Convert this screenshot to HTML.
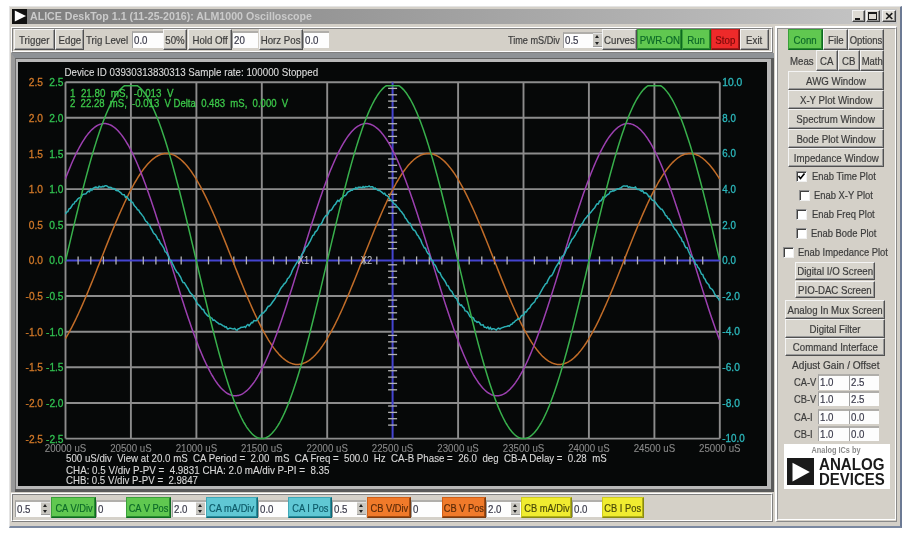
<!DOCTYPE html>
<html><head><meta charset="utf-8">
<style>
html,body{margin:0;padding:0;}
body{width:912px;height:534px;background:#ffffff;position:relative;overflow:hidden;font-family:"Liberation Sans",sans-serif;font-size:11px;color:#3c3c3c;-webkit-text-stroke:0.2px;}
.a{position:absolute;box-sizing:border-box;}
.b{position:absolute;box-sizing:border-box;background:#d8d5cd;border:1px solid;border-color:#f4f4f4 #505050 #505050 #f4f4f4;box-shadow:inset -1px -1px #9a9a9a;display:flex;align-items:center;justify-content:center;white-space:nowrap;overflow:hidden;color:#3c3c3c;}
.b span{display:inline-block;flex:none;}
.e{position:absolute;box-sizing:border-box;background:#fdfdfd;border-top:2px solid #b0aeaa;border-left:1px solid #a0a0a0;white-space:nowrap;overflow:hidden;color:#3a3a4a;padding-left:1px;}
.e span{display:inline-block;transform-origin:0 50%;}
.l{position:absolute;white-space:nowrap;color:#3c3c3c;transform-origin:0 50%;}
.sp{position:absolute;box-sizing:border-box;background:#c8c6c0;border-top:1px solid #e0e0e0;border-bottom:1px solid #9a9a9a;}
.sp:before,.sp:after{content:"";position:absolute;left:2px;border-left:2.5px solid transparent;border-right:2.5px solid transparent;}
.sp:before{top:1.5px;border-bottom:3px solid #202020;}
.sp:after{bottom:1.5px;border-top:3px solid #202020;}
.g{background:#60c850;color:#0c6a28;border-color:#3aa03a #0c6a20 #0c6a20 #3aa03a;box-shadow:inset -1px -1px #2a8a30;}
.cy{background:#60c8d4;color:#0c5a68;border-color:#40a8b8 #0c6a78 #0c6a78 #40a8b8;box-shadow:inset -1px -1px #2a8a98;}
.or{background:#f07a2a;color:#5a2a08;border-color:#d06018 #7a3a10 #7a3a10 #d06018;box-shadow:inset -1px -1px #a04a10;}
.ye{background:#f0ec30;color:#4a4a08;border-color:#d0cc20 #8a8a10 #8a8a10 #d0cc20;box-shadow:inset -1px -1px #b0b018;}
.rd{background:#ee2a2a;color:#7a0a0a;border-color:#c82020 #7a1010 #7a1010 #c82020;box-shadow:inset -1px -1px #a01818;}
</style></head><body>
<div id="root" style="position:absolute;left:0;top:0;width:912px;height:534px;overflow:hidden;filter:blur(0.35px)">
<div class="a" style="left:8.5px;top:5.5px;width:893.5px;height:522.0px;background:#d4d0c8;border-left:1px solid #e4e4e4;border-top:1px solid #e4e4e4;border-right:2px solid #6c7a94;border-bottom:2px solid #7a88a0;"></div>
<div class="a" style="left:12.0px;top:8.5px;width:885.0px;height:15.5px;background:linear-gradient(to right,#7c7c7c,#c6c6c6);"></div>
<div class="a" style="left:12.3px;top:8.5px;width:15.0px;height:15.0px;background:#101010;"></div>
<svg class="a" style="left:0;top:0" width="40" height="30"><polygon points="14.8,10.4 26,15.9 14.8,21.4" fill="#fff"/></svg>
<div class="l" style="left:30.0px;top:8.8px;line-height:14px;font-size:11px;transform:scaleX(0.965);color:#cacaca;font-weight:bold;-webkit-text-stroke:0;">ALICE DeskTop 1.1 (11-25-2016): ALM1000 Oscilloscope</div>
<div class="a" style="left:852.0px;top:10.0px;width:13.0px;height:12.0px;background:#dedbd4;border:1px solid;border-color:#f4f4f4 #404040 #404040 #f4f4f4;box-shadow:inset -1px -1px #909090;"></div>
<div class="a" style="left:854.8px;top:18.0px;width:5.7px;height:2.0px;background:#1a1a1a;"></div>
<div class="a" style="left:865.5px;top:10.0px;width:14.5px;height:12.0px;background:#dedbd4;border:1px solid;border-color:#f4f4f4 #404040 #404040 #f4f4f4;box-shadow:inset -1px -1px #909090;"></div>
<div class="a" style="left:868.0px;top:11.5px;width:8.5px;height:8.5px;border:1px solid #1a1a1a;border-top-width:2px;"></div>
<div class="a" style="left:881.5px;top:10.0px;width:14.5px;height:12.0px;background:#dedbd4;border:1px solid;border-color:#f4f4f4 #404040 #404040 #f4f4f4;box-shadow:inset -1px -1px #909090;"></div>
<svg class="a" style="left:882px;top:10px" width="14" height="12"><path d="M4.2,3.2 L10.3,9 M10.3,3.2 L4.2,9" stroke="#1a1a1a" stroke-width="1.6"/></svg>
<div class="a" style="left:11.0px;top:27.0px;width:762.0px;height:26.0px;border:1px solid;border-color:#ffffff #808080 #808080 #ffffff;"></div>
<div class="a" style="left:12.0px;top:28.0px;width:760.0px;height:24.0px;border:1px solid;border-color:#808080 #ffffff #ffffff #808080;"></div>
<div class="b " style="left:14.0px;top:29.0px;width:41.0px;height:21.0px;"><span style="transform:scaleX(0.880);font-size:11px">Trigger</span></div>
<div class="b " style="left:55.0px;top:29.0px;width:29.0px;height:21.0px;"><span style="transform:scaleX(0.880);font-size:11px">Edge</span></div>
<div class="l" style="left:86.0px;top:32.5px;line-height:14px;font-size:11px;transform:scaleX(0.880);">Trig Level</div>
<div class="e" style="left:132.0px;top:31.0px;width:31.0px;height:17.0px;line-height:14.0px"><span style="transform:scaleX(0.880)">0.0</span></div>
<div class="b " style="left:163.0px;top:29.0px;width:24.0px;height:21.0px;"><span style="transform:scaleX(0.880);font-size:11px">50%</span></div>
<div class="b " style="left:188.0px;top:29.0px;width:44.0px;height:21.0px;"><span style="transform:scaleX(0.880);font-size:11px">Hold Off</span></div>
<div class="e" style="left:232.0px;top:31.0px;width:26.0px;height:17.0px;line-height:14.0px"><span style="transform:scaleX(0.880)">20</span></div>
<div class="b " style="left:259.0px;top:29.0px;width:44.0px;height:21.0px;"><span style="transform:scaleX(0.880);font-size:11px">Horz Pos</span></div>
<div class="e" style="left:303.0px;top:31.0px;width:26.0px;height:17.0px;line-height:14.0px"><span style="transform:scaleX(0.880)">0.0</span></div>
<div class="l" style="left:508.0px;top:33.0px;line-height:14px;font-size:11px;transform:scaleX(0.830);">Time mS/Div</div>
<div class="e" style="left:563.0px;top:32.0px;width:39.0px;height:16.0px;line-height:13.0px"><span style="transform:scaleX(0.880)">0.5</span></div>
<div class="sp" style="left:593.0px;top:32.8px;width:9.0px;height:14.4px"></div>
<div class="b " style="left:602.0px;top:29.0px;width:35.0px;height:21.0px;"><span style="transform:scaleX(0.880);font-size:11px">Curves</span></div>
<div class="b g" style="left:637.0px;top:29.0px;width:45.0px;height:21.0px;"><span style="transform:scaleX(0.880);font-size:11px">PWR-ON</span></div>
<div class="b g" style="left:682.0px;top:29.0px;width:29.0px;height:21.0px;"><span style="transform:scaleX(0.880);font-size:11px">Run</span></div>
<div class="b rd" style="left:711.0px;top:29.0px;width:29.0px;height:21.0px;"><span style="transform:scaleX(0.880);font-size:11px">Stop</span></div>
<div class="b " style="left:740.0px;top:29.0px;width:29.0px;height:21.0px;"><span style="transform:scaleX(0.880);font-size:11px">Exit</span></div>
<div class="a" style="left:11.0px;top:52.5px;width:763.0px;height:439.5px;background:#5a5a5a;border-top:5px solid #8e9296;border-left:4px solid #9a9a9a;"></div>
<div class="a" style="left:15.0px;top:57.5px;width:755.5px;height:431.0px;background:#b8b8b8;border-top:1px solid #606060;border-left:1px solid #707070;"></div>
<div class="a" style="left:18.0px;top:62.0px;width:749.0px;height:424.0px;background:#060808;"></div>
<svg class="a" style="left:0;top:0" width="912" height="534" font-family="Liberation Sans, sans-serif"><defs><clipPath id="cc"><rect x="18" y="62" width="749" height="424"/></clipPath></defs><g clip-path="url(#cc)"><line x1="65.5" y1="82.2" x2="65.5" y2="438.6" stroke="#8c8c8c" stroke-width="1.9"/>
<line x1="130.9" y1="82.2" x2="130.9" y2="438.6" stroke="#8c8c8c" stroke-width="1.9"/>
<line x1="196.4" y1="82.2" x2="196.4" y2="438.6" stroke="#8c8c8c" stroke-width="1.9"/>
<line x1="261.8" y1="82.2" x2="261.8" y2="438.6" stroke="#8c8c8c" stroke-width="1.9"/>
<line x1="327.2" y1="82.2" x2="327.2" y2="438.6" stroke="#8c8c8c" stroke-width="1.9"/>
<line x1="458.1" y1="82.2" x2="458.1" y2="438.6" stroke="#8c8c8c" stroke-width="1.9"/>
<line x1="523.5" y1="82.2" x2="523.5" y2="438.6" stroke="#8c8c8c" stroke-width="1.9"/>
<line x1="588.9" y1="82.2" x2="588.9" y2="438.6" stroke="#8c8c8c" stroke-width="1.9"/>
<line x1="654.4" y1="82.2" x2="654.4" y2="438.6" stroke="#8c8c8c" stroke-width="1.9"/>
<line x1="719.8" y1="82.2" x2="719.8" y2="438.6" stroke="#8c8c8c" stroke-width="1.9"/>
<line x1="65.5" y1="82.2" x2="719.8" y2="82.2" stroke="#8c8c8c" stroke-width="1.9"/>
<line x1="65.5" y1="117.8" x2="719.8" y2="117.8" stroke="#8c8c8c" stroke-width="1.9"/>
<line x1="65.5" y1="153.5" x2="719.8" y2="153.5" stroke="#8c8c8c" stroke-width="1.9"/>
<line x1="65.5" y1="189.1" x2="719.8" y2="189.1" stroke="#8c8c8c" stroke-width="1.9"/>
<line x1="65.5" y1="224.8" x2="719.8" y2="224.8" stroke="#8c8c8c" stroke-width="1.9"/>
<line x1="65.5" y1="296.0" x2="719.8" y2="296.0" stroke="#8c8c8c" stroke-width="1.9"/>
<line x1="65.5" y1="331.7" x2="719.8" y2="331.7" stroke="#8c8c8c" stroke-width="1.9"/>
<line x1="65.5" y1="367.3" x2="719.8" y2="367.3" stroke="#8c8c8c" stroke-width="1.9"/>
<line x1="65.5" y1="403.0" x2="719.8" y2="403.0" stroke="#8c8c8c" stroke-width="1.9"/>
<line x1="65.5" y1="438.6" x2="719.8" y2="438.6" stroke="#8c8c8c" stroke-width="1.9"/>
<line x1="65.5" y1="260.4" x2="719.8" y2="260.4" stroke="#4444d0" stroke-width="2"/>
<line x1="392.6" y1="82.2" x2="392.6" y2="438.6" stroke="#4444d0" stroke-width="2"/>
<line x1="78.1" y1="256.4" x2="78.1" y2="264.4" stroke="#b4b4b4" stroke-width="1.3"/>
<line x1="90.8" y1="256.4" x2="90.8" y2="264.4" stroke="#b4b4b4" stroke-width="1.3"/>
<line x1="103.4" y1="256.4" x2="103.4" y2="264.4" stroke="#b4b4b4" stroke-width="1.3"/>
<line x1="116.0" y1="256.4" x2="116.0" y2="264.4" stroke="#b4b4b4" stroke-width="1.3"/>
<line x1="143.3" y1="256.4" x2="143.3" y2="264.4" stroke="#b4b4b4" stroke-width="1.3"/>
<line x1="155.9" y1="256.4" x2="155.9" y2="264.4" stroke="#b4b4b4" stroke-width="1.3"/>
<line x1="168.6" y1="256.4" x2="168.6" y2="264.4" stroke="#b4b4b4" stroke-width="1.3"/>
<line x1="181.2" y1="256.4" x2="181.2" y2="264.4" stroke="#b4b4b4" stroke-width="1.3"/>
<line x1="208.5" y1="256.4" x2="208.5" y2="264.4" stroke="#b4b4b4" stroke-width="1.3"/>
<line x1="221.1" y1="256.4" x2="221.1" y2="264.4" stroke="#b4b4b4" stroke-width="1.3"/>
<line x1="233.8" y1="256.4" x2="233.8" y2="264.4" stroke="#b4b4b4" stroke-width="1.3"/>
<line x1="246.4" y1="256.4" x2="246.4" y2="264.4" stroke="#b4b4b4" stroke-width="1.3"/>
<line x1="273.6" y1="256.4" x2="273.6" y2="264.4" stroke="#b4b4b4" stroke-width="1.3"/>
<line x1="286.3" y1="256.4" x2="286.3" y2="264.4" stroke="#b4b4b4" stroke-width="1.3"/>
<line x1="298.9" y1="256.4" x2="298.9" y2="264.4" stroke="#b4b4b4" stroke-width="1.3"/>
<line x1="311.6" y1="256.4" x2="311.6" y2="264.4" stroke="#b4b4b4" stroke-width="1.3"/>
<line x1="338.8" y1="256.4" x2="338.8" y2="264.4" stroke="#b4b4b4" stroke-width="1.3"/>
<line x1="351.5" y1="256.4" x2="351.5" y2="264.4" stroke="#b4b4b4" stroke-width="1.3"/>
<line x1="364.1" y1="256.4" x2="364.1" y2="264.4" stroke="#b4b4b4" stroke-width="1.3"/>
<line x1="376.8" y1="256.4" x2="376.8" y2="264.4" stroke="#b4b4b4" stroke-width="1.3"/>
<line x1="404.0" y1="256.4" x2="404.0" y2="264.4" stroke="#b4b4b4" stroke-width="1.3"/>
<line x1="416.6" y1="256.4" x2="416.6" y2="264.4" stroke="#b4b4b4" stroke-width="1.3"/>
<line x1="429.3" y1="256.4" x2="429.3" y2="264.4" stroke="#b4b4b4" stroke-width="1.3"/>
<line x1="441.9" y1="256.4" x2="441.9" y2="264.4" stroke="#b4b4b4" stroke-width="1.3"/>
<line x1="469.2" y1="256.4" x2="469.2" y2="264.4" stroke="#b4b4b4" stroke-width="1.3"/>
<line x1="481.8" y1="256.4" x2="481.8" y2="264.4" stroke="#b4b4b4" stroke-width="1.3"/>
<line x1="494.5" y1="256.4" x2="494.5" y2="264.4" stroke="#b4b4b4" stroke-width="1.3"/>
<line x1="507.1" y1="256.4" x2="507.1" y2="264.4" stroke="#b4b4b4" stroke-width="1.3"/>
<line x1="534.4" y1="256.4" x2="534.4" y2="264.4" stroke="#b4b4b4" stroke-width="1.3"/>
<line x1="547.0" y1="256.4" x2="547.0" y2="264.4" stroke="#b4b4b4" stroke-width="1.3"/>
<line x1="559.7" y1="256.4" x2="559.7" y2="264.4" stroke="#b4b4b4" stroke-width="1.3"/>
<line x1="572.3" y1="256.4" x2="572.3" y2="264.4" stroke="#b4b4b4" stroke-width="1.3"/>
<line x1="599.5" y1="256.4" x2="599.5" y2="264.4" stroke="#b4b4b4" stroke-width="1.3"/>
<line x1="612.2" y1="256.4" x2="612.2" y2="264.4" stroke="#b4b4b4" stroke-width="1.3"/>
<line x1="624.8" y1="256.4" x2="624.8" y2="264.4" stroke="#b4b4b4" stroke-width="1.3"/>
<line x1="637.5" y1="256.4" x2="637.5" y2="264.4" stroke="#b4b4b4" stroke-width="1.3"/>
<line x1="664.7" y1="256.4" x2="664.7" y2="264.4" stroke="#b4b4b4" stroke-width="1.3"/>
<line x1="677.4" y1="256.4" x2="677.4" y2="264.4" stroke="#b4b4b4" stroke-width="1.3"/>
<line x1="690.0" y1="256.4" x2="690.0" y2="264.4" stroke="#b4b4b4" stroke-width="1.3"/>
<line x1="702.7" y1="256.4" x2="702.7" y2="264.4" stroke="#b4b4b4" stroke-width="1.3"/>
<line x1="388.1" y1="88.4" x2="397.1" y2="88.4" stroke="#b4b4b4" stroke-width="1.3"/>
<line x1="388.1" y1="94.8" x2="397.1" y2="94.8" stroke="#b4b4b4" stroke-width="1.3"/>
<line x1="388.1" y1="101.1" x2="397.1" y2="101.1" stroke="#b4b4b4" stroke-width="1.3"/>
<line x1="388.1" y1="107.5" x2="397.1" y2="107.5" stroke="#b4b4b4" stroke-width="1.3"/>
<line x1="388.1" y1="123.7" x2="397.1" y2="123.7" stroke="#b4b4b4" stroke-width="1.3"/>
<line x1="388.1" y1="130.0" x2="397.1" y2="130.0" stroke="#b4b4b4" stroke-width="1.3"/>
<line x1="388.1" y1="136.4" x2="397.1" y2="136.4" stroke="#b4b4b4" stroke-width="1.3"/>
<line x1="388.1" y1="142.7" x2="397.1" y2="142.7" stroke="#b4b4b4" stroke-width="1.3"/>
<line x1="388.1" y1="159.0" x2="397.1" y2="159.0" stroke="#b4b4b4" stroke-width="1.3"/>
<line x1="388.1" y1="165.3" x2="397.1" y2="165.3" stroke="#b4b4b4" stroke-width="1.3"/>
<line x1="388.1" y1="171.7" x2="397.1" y2="171.7" stroke="#b4b4b4" stroke-width="1.3"/>
<line x1="388.1" y1="178.0" x2="397.1" y2="178.0" stroke="#b4b4b4" stroke-width="1.3"/>
<line x1="388.1" y1="194.3" x2="397.1" y2="194.3" stroke="#b4b4b4" stroke-width="1.3"/>
<line x1="388.1" y1="200.6" x2="397.1" y2="200.6" stroke="#b4b4b4" stroke-width="1.3"/>
<line x1="388.1" y1="207.0" x2="397.1" y2="207.0" stroke="#b4b4b4" stroke-width="1.3"/>
<line x1="388.1" y1="213.3" x2="397.1" y2="213.3" stroke="#b4b4b4" stroke-width="1.3"/>
<line x1="388.1" y1="229.6" x2="397.1" y2="229.6" stroke="#b4b4b4" stroke-width="1.3"/>
<line x1="388.1" y1="235.9" x2="397.1" y2="235.9" stroke="#b4b4b4" stroke-width="1.3"/>
<line x1="388.1" y1="242.3" x2="397.1" y2="242.3" stroke="#b4b4b4" stroke-width="1.3"/>
<line x1="388.1" y1="248.6" x2="397.1" y2="248.6" stroke="#b4b4b4" stroke-width="1.3"/>
<line x1="388.1" y1="264.8" x2="397.1" y2="264.8" stroke="#b4b4b4" stroke-width="1.3"/>
<line x1="388.1" y1="271.2" x2="397.1" y2="271.2" stroke="#b4b4b4" stroke-width="1.3"/>
<line x1="388.1" y1="277.5" x2="397.1" y2="277.5" stroke="#b4b4b4" stroke-width="1.3"/>
<line x1="388.1" y1="283.9" x2="397.1" y2="283.9" stroke="#b4b4b4" stroke-width="1.3"/>
<line x1="388.1" y1="300.1" x2="397.1" y2="300.1" stroke="#b4b4b4" stroke-width="1.3"/>
<line x1="388.1" y1="306.5" x2="397.1" y2="306.5" stroke="#b4b4b4" stroke-width="1.3"/>
<line x1="388.1" y1="312.8" x2="397.1" y2="312.8" stroke="#b4b4b4" stroke-width="1.3"/>
<line x1="388.1" y1="319.2" x2="397.1" y2="319.2" stroke="#b4b4b4" stroke-width="1.3"/>
<line x1="388.1" y1="335.4" x2="397.1" y2="335.4" stroke="#b4b4b4" stroke-width="1.3"/>
<line x1="388.1" y1="341.8" x2="397.1" y2="341.8" stroke="#b4b4b4" stroke-width="1.3"/>
<line x1="388.1" y1="348.1" x2="397.1" y2="348.1" stroke="#b4b4b4" stroke-width="1.3"/>
<line x1="388.1" y1="354.5" x2="397.1" y2="354.5" stroke="#b4b4b4" stroke-width="1.3"/>
<line x1="388.1" y1="370.7" x2="397.1" y2="370.7" stroke="#b4b4b4" stroke-width="1.3"/>
<line x1="388.1" y1="377.1" x2="397.1" y2="377.1" stroke="#b4b4b4" stroke-width="1.3"/>
<line x1="388.1" y1="383.4" x2="397.1" y2="383.4" stroke="#b4b4b4" stroke-width="1.3"/>
<line x1="388.1" y1="389.8" x2="397.1" y2="389.8" stroke="#b4b4b4" stroke-width="1.3"/>
<line x1="388.1" y1="406.0" x2="397.1" y2="406.0" stroke="#b4b4b4" stroke-width="1.3"/>
<line x1="388.1" y1="412.4" x2="397.1" y2="412.4" stroke="#b4b4b4" stroke-width="1.3"/>
<line x1="388.1" y1="418.7" x2="397.1" y2="418.7" stroke="#b4b4b4" stroke-width="1.3"/>
<line x1="388.1" y1="425.1" x2="397.1" y2="425.1" stroke="#b4b4b4" stroke-width="1.3"/>
<polyline fill="none" stroke="#c06c28" stroke-width="1.5" points="65.5,338.6 66.5,336.9 67.5,335.2 68.5,333.4 69.5,331.6 70.5,329.7 71.5,327.8 72.5,325.9 73.5,323.9 74.5,321.9 75.5,319.9 76.5,317.8 77.5,315.6 78.5,313.5 79.5,311.3 80.5,309.1 81.5,306.9 82.5,304.6 83.5,302.3 84.5,300.0 85.5,297.6 86.5,295.3 87.5,292.9 88.5,290.5 89.5,288.0 90.5,285.6 91.5,283.1 92.5,280.7 93.5,278.2 94.5,275.7 95.5,273.2 96.5,270.7 97.5,268.1 98.5,265.6 99.5,263.1 100.5,260.6 101.5,258.0 102.5,255.5 103.5,253.0 104.5,250.4 105.5,247.9 106.5,245.4 107.5,242.9 108.5,240.4 109.5,237.9 110.5,235.4 111.5,233.0 112.5,230.5 113.5,228.1 114.5,225.7 115.5,223.3 116.5,220.9 117.5,218.6 118.5,216.2 119.5,213.9 120.5,211.7 121.5,209.4 122.5,207.2 123.5,205.0 124.5,202.8 125.5,200.7 126.5,198.6 127.5,196.5 128.5,194.5 129.5,192.5 130.5,190.6 131.5,188.7 132.5,186.8 133.5,185.0 134.5,183.2 135.5,181.5 136.5,179.8 137.5,178.1 138.5,176.5 139.5,175.0 140.5,173.5 141.5,172.0 142.5,170.6 143.5,169.2 144.5,167.9 145.5,166.7 146.5,165.5 147.5,164.3 148.5,163.2 149.5,162.2 150.5,161.2 151.5,160.3 152.5,159.4 153.5,158.6 154.5,157.9 155.5,157.2 156.5,156.5 157.5,156.0 158.5,155.4 159.5,155.0 160.5,154.6 161.5,154.3 162.5,154.0 163.5,153.8 164.5,153.6 165.5,153.5 166.5,153.5 167.5,153.5 168.5,153.6 169.5,153.7 170.5,154.0 171.5,154.2 172.5,154.6 173.5,154.9 174.5,155.4 175.5,155.9 176.5,156.5 177.5,157.1 178.5,157.8 179.5,158.5 180.5,159.3 181.5,160.2 182.5,161.1 183.5,162.1 184.5,163.1 185.5,164.2 186.5,165.3 187.5,166.5 188.5,167.8 189.5,169.1 190.5,170.4 191.5,171.8 192.5,173.3 193.5,174.8 194.5,176.3 195.5,177.9 196.5,179.6 197.5,181.3 198.5,183.0 199.5,184.8 200.5,186.6 201.5,188.5 202.5,190.4 203.5,192.3 204.5,194.3 205.5,196.3 206.5,198.4 207.5,200.5 208.5,202.6 209.5,204.8 210.5,206.9 211.5,209.2 212.5,211.4 213.5,213.7 214.5,216.0 215.5,218.3 216.5,220.7 217.5,223.0 218.5,225.4 219.5,227.8 220.5,230.3 221.5,232.7 222.5,235.2 223.5,237.6 224.5,240.1 225.5,242.6 226.5,245.1 227.5,247.6 228.5,250.2 229.5,252.7 230.5,255.2 231.5,257.8 232.5,260.3 233.5,262.8 234.5,265.3 235.5,267.9 236.5,270.4 237.5,272.9 238.5,275.4 239.5,277.9 240.5,280.4 241.5,282.9 242.5,285.3 243.5,287.8 244.5,290.2 245.5,292.6 246.5,295.0 247.5,297.4 248.5,299.7 249.5,302.0 250.5,304.3 251.5,306.6 252.5,308.9 253.5,311.1 254.5,313.3 255.5,315.4 256.5,317.5 257.5,319.6 258.5,321.7 259.5,323.7 260.5,325.7 261.5,327.6 262.5,329.5 263.5,331.4 264.5,333.2 265.5,335.0 266.5,336.7 267.5,338.4 268.5,340.1 269.5,341.7 270.5,343.2 271.5,344.7 272.5,346.2 273.5,347.6 274.5,348.9 275.5,350.2 276.5,351.4 277.5,352.6 278.5,353.8 279.5,354.9 280.5,355.9 281.5,356.9 282.5,357.8 283.5,358.6 284.5,359.4 285.5,360.2 286.5,360.9 287.5,361.5 288.5,362.1 289.5,362.6 290.5,363.0 291.5,363.4 292.5,363.7 293.5,364.0 294.5,364.2 295.5,364.4 296.5,364.4 297.5,364.5 298.5,364.4 299.5,364.3 300.5,364.2 301.5,364.0 302.5,363.7 303.5,363.3 304.5,362.9 305.5,362.5 306.5,362.0 307.5,361.4 308.5,360.8 309.5,360.1 310.5,359.3 311.5,358.5 312.5,357.6 313.5,356.7 314.5,355.7 315.5,354.7 316.5,353.6 317.5,352.4 318.5,351.2 319.5,350.0 320.5,348.7 321.5,347.3 322.5,345.9 323.5,344.4 324.5,342.9 325.5,341.4 326.5,339.8 327.5,338.1 328.5,336.4 329.5,334.7 330.5,332.9 331.5,331.1 332.5,329.2 333.5,327.3 334.5,325.3 335.5,323.4 336.5,321.3 337.5,319.3 338.5,317.2 339.5,315.0 340.5,312.9 341.5,310.7 342.5,308.5 343.5,306.2 344.5,303.9 345.5,301.6 346.5,299.3 347.5,297.0 348.5,294.6 349.5,292.2 350.5,289.8 351.5,287.3 352.5,284.9 353.5,282.4 354.5,280.0 355.5,277.5 356.5,275.0 357.5,272.5 358.5,270.0 359.5,267.4 360.5,264.9 361.5,262.4 362.5,259.8 363.5,257.3 364.5,254.8 365.5,252.2 366.5,249.7 367.5,247.2 368.5,244.7 369.5,242.2 370.5,239.7 371.5,237.2 372.5,234.7 373.5,232.3 374.5,229.8 375.5,227.4 376.5,225.0 377.5,222.6 378.5,220.2 379.5,217.9 380.5,215.6 381.5,213.3 382.5,211.0 383.5,208.8 384.5,206.6 385.5,204.4 386.5,202.2 387.5,200.1 388.5,198.0 389.5,196.0 390.5,194.0 391.5,192.0 392.5,190.1 393.5,188.2 394.5,186.3 395.5,184.5 396.5,182.7 397.5,181.0 398.5,179.3 399.5,177.7 400.5,176.1 401.5,174.5 402.5,173.0 403.5,171.6 404.5,170.2 405.5,168.9 406.5,167.6 407.5,166.3 408.5,165.1 409.5,164.0 410.5,162.9 411.5,161.9 412.5,161.0 413.5,160.0 414.5,159.2 415.5,158.4 416.5,157.7 417.5,157.0 418.5,156.4 419.5,155.8 420.5,155.3 421.5,154.9 422.5,154.5 423.5,154.2 424.5,153.9 425.5,153.7 426.5,153.6 427.5,153.5 428.5,153.5 429.5,153.5 430.5,153.6 431.5,153.8 432.5,154.0 433.5,154.3 434.5,154.7 435.5,155.1 436.5,155.5 437.5,156.1 438.5,156.6 439.5,157.3 440.5,158.0 441.5,158.8 442.5,159.6 443.5,160.5 444.5,161.4 445.5,162.4 446.5,163.4 447.5,164.5 448.5,165.7 449.5,166.9 450.5,168.1 451.5,169.5 452.5,170.8 453.5,172.2 454.5,173.7 455.5,175.2 456.5,176.8 457.5,178.4 458.5,180.1 459.5,181.8 460.5,183.5 461.5,185.3 462.5,187.1 463.5,189.0 464.5,190.9 465.5,192.9 466.5,194.9 467.5,196.9 468.5,199.0 469.5,201.1 470.5,203.2 471.5,205.4 472.5,207.6 473.5,209.8 474.5,212.0 475.5,214.3 476.5,216.6 477.5,219.0 478.5,221.3 479.5,223.7 480.5,226.1 481.5,228.5 482.5,230.9 483.5,233.4 484.5,235.9 485.5,238.3 486.5,240.8 487.5,243.3 488.5,245.8 489.5,248.3 490.5,250.9 491.5,253.4 492.5,255.9 493.5,258.5 494.5,261.0 495.5,263.5 496.5,266.1 497.5,268.6 498.5,271.1 499.5,273.6 500.5,276.1 501.5,278.6 502.5,281.1 503.5,283.6 504.5,286.0 505.5,288.5 506.5,290.9 507.5,293.3 508.5,295.7 509.5,298.0 510.5,300.4 511.5,302.7 512.5,305.0 513.5,307.2 514.5,309.5 515.5,311.7 516.5,313.9 517.5,316.0 518.5,318.1 519.5,320.2 520.5,322.3 521.5,324.3 522.5,326.2 523.5,328.2 524.5,330.1 525.5,331.9 526.5,333.7 527.5,335.5 528.5,337.2 529.5,338.9 530.5,340.5 531.5,342.1 532.5,343.6 533.5,345.1 534.5,346.6 535.5,347.9 536.5,349.3 537.5,350.6 538.5,351.8 539.5,353.0 540.5,354.1 541.5,355.2 542.5,356.2 543.5,357.1 544.5,358.0 545.5,358.9 546.5,359.7 547.5,360.4 548.5,361.1 549.5,361.7 550.5,362.2 551.5,362.7 552.5,363.1 553.5,363.5 554.5,363.8 555.5,364.1 556.5,364.3 557.5,364.4 558.5,364.5 559.5,364.5 560.5,364.4 561.5,364.3 562.5,364.1 563.5,363.9 564.5,363.6 565.5,363.2 566.5,362.8 567.5,362.3 568.5,361.8 569.5,361.2 570.5,360.6 571.5,359.9 572.5,359.1 573.5,358.3 574.5,357.4 575.5,356.4 576.5,355.4 577.5,354.4 578.5,353.3 579.5,352.1 580.5,350.9 581.5,349.6 582.5,348.3 583.5,346.9 584.5,345.5 585.5,344.0 586.5,342.5 587.5,340.9 588.5,339.3 589.5,337.7 590.5,335.9 591.5,334.2 592.5,332.4 593.5,330.6 594.5,328.7 595.5,326.8 596.5,324.8 597.5,322.8 598.5,320.8 599.5,318.7 600.5,316.6 601.5,314.4 602.5,312.3 603.5,310.1 604.5,307.8 605.5,305.6 606.5,303.3 607.5,301.0 608.5,298.7 609.5,296.3 610.5,293.9 611.5,291.5 612.5,289.1 613.5,286.7 614.5,284.2 615.5,281.7 616.5,279.3 617.5,276.8 618.5,274.3 619.5,271.8 620.5,269.2 621.5,266.7 622.5,264.2 623.5,261.7 624.5,259.1 625.5,256.6 626.5,254.1 627.5,251.5 628.5,249.0 629.5,246.5 630.5,244.0 631.5,241.5 632.5,239.0 633.5,236.5 634.5,234.0 635.5,231.6 636.5,229.2 637.5,226.7 638.5,224.3 639.5,222.0 640.5,219.6 641.5,217.3 642.5,214.9 643.5,212.6 644.5,210.4 645.5,208.2 646.5,205.9 647.5,203.8 648.5,201.6 649.5,199.5 650.5,197.4 651.5,195.4 652.5,193.4 653.5,191.4 654.5,189.5 655.5,187.6 656.5,185.8 657.5,184.0 658.5,182.2 659.5,180.5 660.5,178.8 661.5,177.2 662.5,175.6 663.5,174.1 664.5,172.6 665.5,171.2 666.5,169.8 667.5,168.5 668.5,167.2 669.5,166.0 670.5,164.8 671.5,163.7 672.5,162.6 673.5,161.6 674.5,160.7 675.5,159.8 676.5,159.0 677.5,158.2 678.5,157.5 679.5,156.8 680.5,156.2 681.5,155.7 682.5,155.2 683.5,154.8 684.5,154.4 685.5,154.1 686.5,153.9 687.5,153.7 688.5,153.5 689.5,153.5 690.5,153.5 691.5,153.5 692.5,153.7 693.5,153.9 694.5,154.1 695.5,154.4 696.5,154.8 697.5,155.2 698.5,155.7 699.5,156.2 700.5,156.8 701.5,157.5 702.5,158.2 703.5,159.0 704.5,159.8 705.5,160.7 706.5,161.7 707.5,162.7 708.5,163.7 709.5,164.8 710.5,166.0 711.5,167.2 712.5,168.5 713.5,169.8 714.5,171.2 715.5,172.6 716.5,174.1 717.5,175.7 718.5,177.2 719.5,178.9"/>
<polyline fill="none" stroke="#9c40b0" stroke-width="1.5" points="65.5,178.7 66.5,176.1 67.5,173.5 68.5,171.0 69.5,168.6 70.5,166.2 71.5,163.8 72.5,161.5 73.5,159.3 74.5,157.1 75.5,155.0 76.5,152.9 77.5,150.9 78.5,149.0 79.5,147.1 80.5,145.3 81.5,143.6 82.5,141.9 83.5,140.3 84.5,138.8 85.5,137.3 86.5,135.9 87.5,134.6 88.5,133.3 89.5,132.2 90.5,131.0 91.5,130.0 92.5,129.1 93.5,128.2 94.5,127.4 95.5,126.6 96.5,126.0 97.5,125.4 98.5,124.9 99.5,124.5 100.5,124.1 101.5,123.9 102.5,123.7 103.5,123.6 104.5,123.5 105.5,123.6 106.5,123.7 107.5,123.9 108.5,124.2 109.5,124.6 110.5,125.0 111.5,125.5 112.5,126.1 113.5,126.8 114.5,127.5 115.5,128.4 116.5,129.3 117.5,130.2 118.5,131.3 119.5,132.4 120.5,133.6 121.5,134.9 122.5,136.2 123.5,137.6 124.5,139.1 125.5,140.6 126.5,142.3 127.5,144.0 128.5,145.7 129.5,147.5 130.5,149.4 131.5,151.4 132.5,153.4 133.5,155.4 134.5,157.6 135.5,159.8 136.5,162.0 137.5,164.3 138.5,166.7 139.5,169.1 140.5,171.6 141.5,174.1 142.5,176.6 143.5,179.3 144.5,181.9 145.5,184.6 146.5,187.4 147.5,190.2 148.5,193.0 149.5,195.9 150.5,198.8 151.5,201.7 152.5,204.7 153.5,207.7 154.5,210.7 155.5,213.8 156.5,216.9 157.5,220.0 158.5,223.1 159.5,226.3 160.5,229.5 161.5,232.7 162.5,235.9 163.5,239.1 164.5,242.3 165.5,245.6 166.5,248.8 167.5,252.1 168.5,255.4 169.5,258.6 170.5,261.9 171.5,265.2 172.5,268.4 173.5,271.7 174.5,274.9 175.5,278.2 176.5,281.4 177.5,284.6 178.5,287.8 179.5,291.0 180.5,294.2 181.5,297.4 182.5,300.5 183.5,303.6 184.5,306.7 185.5,309.7 186.5,312.7 187.5,315.7 188.5,318.7 189.5,321.6 190.5,324.5 191.5,327.4 192.5,330.2 193.5,333.0 194.5,335.7 195.5,338.4 196.5,341.0 197.5,343.6 198.5,346.2 199.5,348.7 200.5,351.1 201.5,353.5 202.5,355.9 203.5,358.2 204.5,360.4 205.5,362.5 206.5,364.7 207.5,366.7 208.5,368.7 209.5,370.6 210.5,372.5 211.5,374.3 212.5,376.0 213.5,377.7 214.5,379.3 215.5,380.8 216.5,382.3 217.5,383.7 218.5,385.0 219.5,386.2 220.5,387.4 221.5,388.5 222.5,389.5 223.5,390.4 224.5,391.3 225.5,392.1 226.5,392.8 227.5,393.5 228.5,394.0 229.5,394.5 230.5,394.9 231.5,395.3 232.5,395.5 233.5,395.7 234.5,395.8 235.5,395.8 236.5,395.8 237.5,395.6 238.5,395.4 239.5,395.1 240.5,394.8 241.5,394.3 242.5,393.8 243.5,393.2 244.5,392.5 245.5,391.7 246.5,390.9 247.5,390.0 248.5,389.0 249.5,387.9 250.5,386.8 251.5,385.6 252.5,384.3 253.5,383.0 254.5,381.6 255.5,380.1 256.5,378.5 257.5,376.9 258.5,375.2 259.5,373.4 260.5,371.6 261.5,369.7 262.5,367.7 263.5,365.7 264.5,363.6 265.5,361.5 266.5,359.3 267.5,357.0 268.5,354.7 269.5,352.4 270.5,349.9 271.5,347.5 272.5,344.9 273.5,342.4 274.5,339.7 275.5,337.1 276.5,334.4 277.5,331.6 278.5,328.8 279.5,326.0 280.5,323.1 281.5,320.2 282.5,317.3 283.5,314.3 284.5,311.3 285.5,308.2 286.5,305.2 287.5,302.1 288.5,298.9 289.5,295.8 290.5,292.6 291.5,289.5 292.5,286.3 293.5,283.1 294.5,279.8 295.5,276.6 296.5,273.3 297.5,270.1 298.5,266.8 299.5,263.6 300.5,260.3 301.5,257.0 302.5,253.8 303.5,250.5 304.5,247.2 305.5,244.0 306.5,240.7 307.5,237.5 308.5,234.3 309.5,231.1 310.5,227.9 311.5,224.7 312.5,221.6 313.5,218.5 314.5,215.4 315.5,212.3 316.5,209.2 317.5,206.2 318.5,203.2 319.5,200.3 320.5,197.3 321.5,194.4 322.5,191.6 323.5,188.8 324.5,186.0 325.5,183.3 326.5,180.6 327.5,178.0 328.5,175.4 329.5,172.8 330.5,170.3 331.5,167.9 332.5,165.5 333.5,163.2 334.5,160.9 335.5,158.7 336.5,156.5 337.5,154.4 338.5,152.4 339.5,150.4 340.5,148.5 341.5,146.6 342.5,144.8 343.5,143.1 344.5,141.5 345.5,139.9 346.5,138.4 347.5,136.9 348.5,135.5 349.5,134.2 350.5,133.0 351.5,131.8 352.5,130.7 353.5,129.7 354.5,128.8 355.5,127.9 356.5,127.2 357.5,126.4 358.5,125.8 359.5,125.3 360.5,124.8 361.5,124.4 362.5,124.1 363.5,123.8 364.5,123.6 365.5,123.6 366.5,123.5 367.5,123.6 368.5,123.8 369.5,124.0 370.5,124.3 371.5,124.7 372.5,125.1 373.5,125.7 374.5,126.3 375.5,127.0 376.5,127.8 377.5,128.6 378.5,129.5 379.5,130.5 380.5,131.6 381.5,132.7 382.5,133.9 383.5,135.2 384.5,136.6 385.5,138.0 386.5,139.5 387.5,141.1 388.5,142.7 389.5,144.4 390.5,146.2 391.5,148.1 392.5,150.0 393.5,151.9 394.5,153.9 395.5,156.0 396.5,158.2 397.5,160.4 398.5,162.7 399.5,165.0 400.5,167.4 401.5,169.8 402.5,172.3 403.5,174.8 404.5,177.4 405.5,180.0 406.5,182.7 407.5,185.4 408.5,188.2 409.5,191.0 410.5,193.8 411.5,196.7 412.5,199.6 413.5,202.5 414.5,205.5 415.5,208.5 416.5,211.6 417.5,214.6 418.5,217.7 419.5,220.9 420.5,224.0 421.5,227.2 422.5,230.4 423.5,233.6 424.5,236.8 425.5,240.0 426.5,243.2 427.5,246.5 428.5,249.7 429.5,253.0 430.5,256.3 431.5,259.5 432.5,262.8 433.5,266.1 434.5,269.3 435.5,272.6 436.5,275.8 437.5,279.1 438.5,282.3 439.5,285.5 440.5,288.7 441.5,291.9 442.5,295.1 443.5,298.2 444.5,301.4 445.5,304.5 446.5,307.5 447.5,310.6 448.5,313.6 449.5,316.6 450.5,319.5 451.5,322.4 452.5,325.3 453.5,328.2 454.5,331.0 455.5,333.7 456.5,336.5 457.5,339.1 458.5,341.8 459.5,344.4 460.5,346.9 461.5,349.4 462.5,351.8 463.5,354.2 464.5,356.5 465.5,358.8 466.5,361.0 467.5,363.1 468.5,365.2 469.5,367.3 470.5,369.2 471.5,371.2 472.5,373.0 473.5,374.8 474.5,376.5 475.5,378.1 476.5,379.7 477.5,381.2 478.5,382.7 479.5,384.0 480.5,385.3 481.5,386.5 482.5,387.7 483.5,388.8 484.5,389.8 485.5,390.7 486.5,391.6 487.5,392.3 488.5,393.0 489.5,393.6 490.5,394.2 491.5,394.7 492.5,395.0 493.5,395.4 494.5,395.6 495.5,395.7 496.5,395.8 497.5,395.8 498.5,395.7 499.5,395.6 500.5,395.3 501.5,395.0 502.5,394.6 503.5,394.2 504.5,393.6 505.5,393.0 506.5,392.3 507.5,391.5 508.5,390.7 509.5,389.7 510.5,388.7 511.5,387.6 512.5,386.5 513.5,385.3 514.5,384.0 515.5,382.6 516.5,381.1 517.5,379.6 518.5,378.1 519.5,376.4 520.5,374.7 521.5,372.9 522.5,371.1 523.5,369.1 524.5,367.2 525.5,365.1 526.5,363.0 527.5,360.9 528.5,358.7 529.5,356.4 530.5,354.1 531.5,351.7 532.5,349.2 533.5,346.8 534.5,344.2 535.5,341.6 536.5,339.0 537.5,336.3 538.5,333.6 539.5,330.8 540.5,328.0 541.5,325.2 542.5,322.3 543.5,319.4 544.5,316.4 545.5,313.4 546.5,310.4 547.5,307.4 548.5,304.3 549.5,301.2 550.5,298.1 551.5,294.9 552.5,291.8 553.5,288.6 554.5,285.4 555.5,282.2 556.5,278.9 557.5,275.7 558.5,272.4 559.5,269.2 560.5,265.9 561.5,262.6 562.5,259.4 563.5,256.1 564.5,252.8 565.5,249.6 566.5,246.3 567.5,243.1 568.5,239.8 569.5,236.6 570.5,233.4 571.5,230.2 572.5,227.0 573.5,223.8 574.5,220.7 575.5,217.6 576.5,214.5 577.5,211.4 578.5,208.4 579.5,205.4 580.5,202.4 581.5,199.4 582.5,196.5 583.5,193.6 584.5,190.8 585.5,188.0 586.5,185.3 587.5,182.5 588.5,179.9 589.5,177.2 590.5,174.7 591.5,172.1 592.5,169.7 593.5,167.2 594.5,164.9 595.5,162.5 596.5,160.3 597.5,158.1 598.5,155.9 599.5,153.8 600.5,151.8 601.5,149.9 602.5,148.0 603.5,146.1 604.5,144.4 605.5,142.6 606.5,141.0 607.5,139.4 608.5,137.9 609.5,136.5 610.5,135.2 611.5,133.9 612.5,132.7 613.5,131.5 614.5,130.5 615.5,129.5 616.5,128.6 617.5,127.7 618.5,126.9 619.5,126.3 620.5,125.6 621.5,125.1 622.5,124.7 623.5,124.3 624.5,124.0 625.5,123.8 626.5,123.6 627.5,123.5 628.5,123.6 629.5,123.7 630.5,123.8 631.5,124.1 632.5,124.4 633.5,124.8 634.5,125.3 635.5,125.8 636.5,126.5 637.5,127.2 638.5,128.0 639.5,128.8 640.5,129.8 641.5,130.8 642.5,131.9 643.5,133.1 644.5,134.3 645.5,135.6 646.5,137.0 647.5,138.4 648.5,140.0 649.5,141.5 650.5,143.2 651.5,144.9 652.5,146.7 653.5,148.6 654.5,150.5 655.5,152.5 656.5,154.5 657.5,156.6 658.5,158.8 659.5,161.0 660.5,163.3 661.5,165.6 662.5,168.0 663.5,170.5 664.5,173.0 665.5,175.5 666.5,178.1 667.5,180.7 668.5,183.4 669.5,186.2 670.5,188.9 671.5,191.7 672.5,194.6 673.5,197.5 674.5,200.4 675.5,203.4 676.5,206.4 677.5,209.4 678.5,212.4 679.5,215.5 680.5,218.6 681.5,221.7 682.5,224.9 683.5,228.1 684.5,231.3 685.5,234.5 686.5,237.7 687.5,240.9 688.5,244.1 689.5,247.4 690.5,250.7 691.5,253.9 692.5,257.2 693.5,260.5 694.5,263.7 695.5,267.0 696.5,270.3 697.5,273.5 698.5,276.8 699.5,280.0 700.5,283.2 701.5,286.4 702.5,289.6 703.5,292.8 704.5,296.0 705.5,299.1 706.5,302.2 707.5,305.3 708.5,308.4 709.5,311.4 710.5,314.4 711.5,317.4 712.5,320.3 713.5,323.3 714.5,326.1 715.5,329.0 716.5,331.8 717.5,334.5 718.5,337.2 719.5,339.9"/>
<polyline fill="none" stroke="#2cb0b4" stroke-width="1.5" points="65.5,214.0 66.7,212.0 67.9,211.6 69.1,208.8 70.3,208.3 71.5,206.5 72.7,204.4 73.9,204.0 75.1,201.6 76.3,201.2 77.5,199.2 78.7,198.1 79.9,197.7 81.1,197.5 82.3,194.9 83.5,194.2 84.7,194.1 85.9,193.9 87.1,192.3 88.3,191.1 89.5,191.7 90.7,189.0 91.9,190.2 93.1,188.4 94.3,187.6 95.5,187.1 96.7,187.2 97.9,188.0 99.1,186.3 100.3,187.0 101.5,187.0 102.7,186.4 103.9,186.7 105.1,185.7 106.3,185.8 107.5,186.3 108.7,187.6 109.9,187.3 111.1,187.4 112.3,188.4 113.5,188.5 114.7,188.7 115.9,190.4 117.1,190.8 118.3,190.5 119.5,191.9 120.7,192.6 121.9,194.2 123.1,194.8 124.3,194.8 125.5,197.3 126.7,196.5 127.9,198.2 129.1,200.1 130.3,200.0 131.5,202.0 132.7,202.3 133.9,205.0 135.1,206.6 136.3,207.7 137.5,209.8 138.7,210.1 139.9,212.5 141.1,213.8 142.3,215.4 143.5,216.8 144.7,219.4 145.9,221.3 147.1,222.0 148.3,224.2 149.5,224.7 150.7,228.0 151.9,229.7 153.1,232.4 154.3,233.9 155.5,234.7 156.7,236.9 157.9,239.5 159.1,240.0 160.3,243.0 161.5,244.4 162.7,246.3 163.9,248.2 165.1,251.8 166.3,252.4 167.5,254.7 168.7,257.1 169.9,260.2 171.1,260.5 172.3,263.4 173.5,265.7 174.7,268.4 175.9,270.3 177.1,272.4 178.3,273.2 179.5,275.5 180.7,277.3 181.9,280.4 183.1,282.5 184.3,282.7 185.5,284.7 186.7,286.7 187.9,288.5 189.1,290.9 190.3,292.9 191.5,294.0 192.7,295.2 193.9,297.8 195.1,299.4 196.3,301.5 197.5,303.9 198.7,304.9 199.9,306.1 201.1,307.8 202.3,309.4 203.5,309.4 204.7,312.6 205.9,313.7 207.1,315.2 208.3,316.2 209.5,316.5 210.7,317.7 211.9,318.1 213.1,320.3 214.3,320.0 215.5,321.0 216.7,322.2 217.9,322.9 219.1,324.0 220.3,324.1 221.5,324.7 222.7,325.6 223.9,326.0 225.1,327.1 226.3,326.8 227.5,329.0 228.7,328.8 229.9,328.0 231.1,328.4 232.3,328.8 233.5,328.9 234.7,328.4 235.9,329.9 237.1,330.1 238.3,328.8 239.5,328.6 240.7,327.5 241.9,327.2 243.1,327.3 244.3,326.7 245.5,327.4 246.7,325.4 247.9,324.5 249.1,325.8 250.3,324.2 251.5,322.5 252.7,322.6 253.9,320.5 255.1,320.7 256.3,320.7 257.5,319.4 258.7,317.9 259.9,315.8 261.1,314.8 262.3,313.1 263.5,313.1 264.7,311.3 265.9,310.4 267.1,308.0 268.3,306.3 269.5,306.1 270.7,304.9 271.9,303.0 273.1,301.3 274.3,299.7 275.5,297.8 276.7,295.0 277.9,293.8 279.1,291.7 280.3,289.2 281.5,287.3 282.7,286.0 283.9,284.1 285.1,283.1 286.3,281.7 287.5,278.7 288.7,277.8 289.9,275.9 291.1,273.8 292.3,270.5 293.5,268.2 294.7,266.2 295.9,264.0 297.1,262.0 298.3,260.9 299.5,259.4 300.7,257.3 301.9,254.4 303.1,252.7 304.3,251.0 305.5,247.4 306.7,246.6 307.9,245.2 309.1,242.9 310.3,240.8 311.5,238.2 312.7,235.6 313.9,235.0 315.1,232.1 316.3,231.2 317.5,229.7 318.7,226.6 319.9,224.7 321.1,224.1 322.3,221.9 323.5,218.9 324.7,217.1 325.9,215.5 327.1,215.5 328.3,213.6 329.5,210.6 330.7,210.6 331.9,209.4 333.1,207.2 334.3,205.2 335.5,204.2 336.7,202.0 337.9,200.4 339.1,201.3 340.3,199.4 341.5,198.0 342.7,197.8 343.9,195.7 345.1,195.7 346.3,194.6 347.5,192.4 348.7,191.7 349.9,191.0 351.1,190.2 352.3,190.3 353.5,188.9 354.7,188.7 355.9,187.6 357.1,188.9 358.3,187.3 359.5,187.2 360.7,187.2 361.9,187.8 363.1,186.6 364.3,187.6 365.5,186.6 366.7,186.7 367.9,186.8 369.1,185.9 370.3,187.0 371.5,186.7 372.7,186.7 373.9,188.8 375.1,187.9 376.3,189.0 377.5,190.1 378.7,190.4 379.9,190.6 381.1,191.7 382.3,192.6 383.5,193.9 384.7,193.3 385.9,195.3 387.1,195.6 388.3,196.7 389.5,198.9 390.7,199.5 391.9,200.8 393.1,202.5 394.3,204.1 395.5,204.4 396.7,206.2 397.9,207.4 399.1,208.8 400.3,210.7 401.5,211.8 402.7,213.5 403.9,215.0 405.1,217.7 406.3,218.9 407.5,221.0 408.7,222.9 409.9,223.2 411.1,225.7 412.3,228.3 413.5,230.0 414.7,230.3 415.9,232.2 417.1,234.8 418.3,236.0 419.5,238.3 420.7,239.9 421.9,243.3 423.1,245.5 424.3,247.8 425.5,248.2 426.7,251.5 427.9,253.4 429.1,254.3 430.3,258.0 431.5,260.2 432.7,260.6 433.9,264.3 435.1,265.1 436.3,267.4 437.5,270.5 438.7,272.2 439.9,272.7 441.1,275.3 442.3,277.5 443.5,279.0 444.7,280.7 445.9,282.9 447.1,285.7 448.3,286.0 449.5,289.0 450.7,290.6 451.9,291.5 453.1,294.0 454.3,296.4 455.5,297.8 456.7,298.5 457.9,302.2 459.1,303.4 460.3,305.4 461.5,305.0 462.7,306.9 463.9,307.8 465.1,310.9 466.3,311.1 467.5,312.1 468.7,314.1 469.9,316.4 471.1,317.4 472.3,317.3 473.5,318.1 474.7,320.8 475.9,321.1 477.1,322.3 478.3,321.8 479.5,322.6 480.7,324.7 481.9,324.9 483.1,324.8 484.3,327.3 485.5,327.2 486.7,328.0 487.9,326.9 489.1,328.9 490.3,327.5 491.5,329.5 492.7,328.8 493.9,328.7 495.1,329.3 496.3,330.1 497.5,328.6 498.7,328.2 499.9,329.0 501.1,328.1 502.3,327.6 503.5,327.3 504.7,326.7 505.9,326.6 507.1,326.3 508.3,325.8 509.5,326.1 510.7,324.4 511.9,324.2 513.1,322.7 514.3,322.2 515.5,320.6 516.7,320.2 517.9,318.6 519.1,319.2 520.3,317.7 521.5,315.7 522.7,315.2 523.9,314.9 525.1,311.8 526.3,312.0 527.5,309.8 528.7,308.5 529.9,307.8 531.1,305.3 532.3,304.0 533.5,302.8 534.7,301.9 535.9,298.8 537.1,298.2 538.3,296.2 539.5,294.3 540.7,292.0 541.9,290.0 543.1,287.6 544.3,285.9 545.5,283.8 546.7,283.4 547.9,280.4 549.1,278.2 550.3,276.1 551.5,275.8 552.7,273.8 553.9,271.4 555.1,268.5 556.3,266.4 557.5,264.5 558.7,262.8 559.9,260.1 561.1,258.6 562.3,256.2 563.5,255.7 564.7,253.7 565.9,250.7 567.1,248.0 568.3,247.5 569.5,244.1 570.7,242.1 571.9,239.4 573.1,238.2 574.3,236.5 575.5,234.6 576.7,232.0 577.9,230.7 579.1,227.8 580.3,226.5 581.5,224.2 582.7,223.1 583.9,220.5 585.1,218.7 586.3,217.6 587.5,215.8 588.7,214.9 589.9,213.2 591.1,212.1 592.3,210.4 593.5,209.0 594.7,207.9 595.9,205.4 597.1,203.9 598.3,204.0 599.5,200.9 600.7,200.9 601.9,199.5 603.1,197.1 604.3,197.7 605.5,196.8 606.7,195.2 607.9,194.5 609.1,193.8 610.3,191.5 611.5,191.6 612.7,190.8 613.9,190.9 615.1,190.2 616.3,189.7 617.5,188.7 618.7,188.9 619.9,188.1 621.1,187.8 622.3,186.5 623.5,185.9 624.7,185.9 625.9,186.3 627.1,185.8 628.3,187.4 629.5,186.9 630.7,187.2 631.9,187.4 633.1,187.8 634.3,187.7 635.5,187.0 636.7,189.2 637.9,189.6 639.1,189.6 640.3,190.3 641.5,191.2 642.7,190.7 643.9,192.9 645.1,192.7 646.3,193.2 647.5,194.5 648.7,196.6 649.9,196.4 651.1,198.7 652.3,200.4 653.5,200.5 654.7,201.5 655.9,203.0 657.1,204.8 658.3,206.4 659.5,207.5 660.7,209.0 661.9,209.2 663.1,210.9 664.3,212.8 665.5,215.5 666.7,216.1 667.9,218.4 669.1,218.9 670.3,220.8 671.5,223.0 672.7,225.7 673.9,227.6 675.1,229.4 676.3,230.5 677.5,232.9 678.7,234.7 679.9,236.7 681.1,237.9 682.3,241.5 683.5,242.0 684.7,245.7 685.9,247.7 687.1,247.7 688.3,250.7 689.5,253.5 690.7,255.9 691.9,256.8 693.1,258.5 694.3,260.4 695.5,264.1 696.7,264.5 697.9,267.4 699.1,268.4 700.3,271.3 701.5,274.2 702.7,274.4 703.9,277.9 705.1,279.2 706.3,282.0 707.5,283.5 708.7,284.4 709.9,287.8 711.1,288.7 712.3,289.5 713.5,291.3 714.7,294.2 715.9,295.8 717.1,297.2 718.3,298.5 719.5,300.6"/>
<polyline fill="none" stroke="#38b04c" stroke-width="1.5" points="65.5,261.1 66.5,256.9 67.5,252.6 68.5,248.3 69.5,244.1 70.5,239.9 71.5,235.6 72.5,231.4 73.5,227.2 74.5,223.1 75.5,218.9 76.5,214.8 77.5,210.7 78.5,206.6 79.5,202.6 80.5,198.6 81.5,194.6 82.5,190.7 83.5,186.8 84.5,182.9 85.5,179.1 86.5,175.4 87.5,171.7 88.5,168.0 89.5,164.4 90.5,160.9 91.5,157.4 92.5,154.0 93.5,150.6 94.5,147.3 95.5,144.1 96.5,140.9 97.5,137.8 98.5,134.8 99.5,131.8 100.5,128.9 101.5,126.1 102.5,123.4 103.5,120.7 104.5,118.2 105.5,115.7 106.5,113.3 107.5,111.0 108.5,108.7 109.5,106.6 110.5,104.5 111.5,102.6 112.5,100.7 113.5,98.9 114.5,97.3 115.5,95.7 116.5,94.2 117.5,92.8 118.5,91.5 119.5,90.3 120.5,89.2 121.5,88.2 122.5,87.2 123.5,86.4 124.5,85.8 125.5,85.8 126.5,85.8 127.5,85.8 128.5,85.8 129.5,85.8 130.5,85.8 131.5,85.8 132.5,85.8 133.5,85.8 134.5,85.8 135.5,85.8 136.5,85.8 137.5,85.8 138.5,86.5 139.5,87.4 140.5,88.3 141.5,89.3 142.5,90.4 143.5,91.6 144.5,93.0 145.5,94.4 146.5,95.9 147.5,97.5 148.5,99.2 149.5,101.0 150.5,102.9 151.5,104.8 152.5,106.9 153.5,109.0 154.5,111.3 155.5,113.6 156.5,116.0 157.5,118.5 158.5,121.1 159.5,123.8 160.5,126.5 161.5,129.3 162.5,132.2 163.5,135.2 164.5,138.2 165.5,141.3 166.5,144.5 167.5,147.7 168.5,151.1 169.5,154.4 170.5,157.9 171.5,161.4 172.5,164.9 173.5,168.5 174.5,172.2 175.5,175.9 176.5,179.7 177.5,183.5 178.5,187.3 179.5,191.2 180.5,195.2 181.5,199.1 182.5,203.1 183.5,207.2 184.5,211.3 185.5,215.4 186.5,219.5 187.5,223.6 188.5,227.8 189.5,232.0 190.5,236.2 191.5,240.5 192.5,244.7 193.5,248.9 194.5,253.2 195.5,257.4 196.5,261.7 197.5,266.0 198.5,270.2 199.5,274.5 200.5,278.7 201.5,283.0 202.5,287.2 203.5,291.4 204.5,295.6 205.5,299.7 206.5,303.9 207.5,308.0 208.5,312.1 209.5,316.2 210.5,320.2 211.5,324.2 212.5,328.2 213.5,332.1 214.5,336.0 215.5,339.8 216.5,343.6 217.5,347.4 218.5,351.1 219.5,354.7 220.5,358.3 221.5,361.8 222.5,365.3 223.5,368.7 224.5,372.1 225.5,375.4 226.5,378.6 227.5,381.8 228.5,384.9 229.5,387.9 230.5,390.8 231.5,393.7 232.5,396.5 233.5,399.2 234.5,401.9 235.5,404.4 236.5,406.9 237.5,409.3 238.5,411.6 239.5,413.8 240.5,415.9 241.5,418.0 242.5,419.9 243.5,421.8 244.5,423.5 245.5,425.2 246.5,426.8 247.5,428.3 248.5,429.6 249.5,430.9 250.5,432.1 251.5,433.2 252.5,434.2 253.5,435.1 254.5,435.9 255.5,436.6 256.5,437.2 257.5,437.7 258.5,438.0 259.5,438.3 260.5,438.5 261.5,438.6 262.5,438.6 263.5,438.5 264.5,438.2 265.5,437.9 266.5,437.5 267.5,436.9 268.5,436.3 269.5,435.6 270.5,434.7 271.5,433.8 272.5,432.8 273.5,431.6 274.5,430.4 275.5,429.1 276.5,427.6 277.5,426.1 278.5,424.5 279.5,422.8 280.5,421.0 281.5,419.1 282.5,417.1 283.5,415.0 284.5,412.9 285.5,410.6 286.5,408.3 287.5,405.9 288.5,403.3 289.5,400.8 290.5,398.1 291.5,395.3 292.5,392.5 293.5,389.6 294.5,386.6 295.5,383.6 296.5,380.5 297.5,377.3 298.5,374.0 299.5,370.7 300.5,367.3 301.5,363.9 302.5,360.4 303.5,356.8 304.5,353.2 305.5,349.5 306.5,345.8 307.5,342.0 308.5,338.2 309.5,334.4 310.5,330.5 311.5,326.5 312.5,322.5 313.5,318.5 314.5,314.5 315.5,310.4 316.5,306.3 317.5,302.2 318.5,298.0 319.5,293.8 320.5,289.6 321.5,285.4 322.5,281.2 323.5,276.9 324.5,272.7 325.5,268.4 326.5,264.2 327.5,259.9 328.5,255.7 329.5,251.4 330.5,247.2 331.5,242.9 332.5,238.7 333.5,234.5 334.5,230.3 335.5,226.1 336.5,221.9 337.5,217.8 338.5,213.6 339.5,209.5 340.5,205.5 341.5,201.5 342.5,197.5 343.5,193.5 344.5,189.6 345.5,185.7 346.5,181.9 347.5,178.1 348.5,174.3 349.5,170.6 350.5,167.0 351.5,163.4 352.5,159.9 353.5,156.4 354.5,153.0 355.5,149.7 356.5,146.4 357.5,143.2 358.5,140.0 359.5,136.9 360.5,133.9 361.5,131.0 362.5,128.1 363.5,125.3 364.5,122.6 365.5,120.0 366.5,117.5 367.5,115.0 368.5,112.6 369.5,110.3 370.5,108.1 371.5,106.0 372.5,104.0 373.5,102.1 374.5,100.2 375.5,98.5 376.5,96.8 377.5,95.2 378.5,93.8 379.5,92.4 380.5,91.1 381.5,89.9 382.5,88.9 383.5,87.9 384.5,87.0 385.5,86.2 386.5,85.8 387.5,85.8 388.5,85.8 389.5,85.8 390.5,85.8 391.5,85.8 392.5,85.8 393.5,85.8 394.5,85.8 395.5,85.8 396.5,85.8 397.5,85.8 398.5,85.8 399.5,86.0 400.5,86.8 401.5,87.6 402.5,88.6 403.5,89.6 404.5,90.8 405.5,92.0 406.5,93.3 407.5,94.8 408.5,96.3 409.5,98.0 410.5,99.7 411.5,101.5 412.5,103.4 413.5,105.4 414.5,107.5 415.5,109.7 416.5,111.9 417.5,114.3 418.5,116.7 419.5,119.2 420.5,121.8 421.5,124.5 422.5,127.3 423.5,130.1 424.5,133.0 425.5,136.0 426.5,139.1 427.5,142.2 428.5,145.4 429.5,148.7 430.5,152.0 431.5,155.4 432.5,158.8 433.5,162.4 434.5,165.9 435.5,169.5 436.5,173.2 437.5,176.9 438.5,180.7 439.5,184.5 440.5,188.4 441.5,192.3 442.5,196.3 443.5,200.2 444.5,204.3 445.5,208.3 446.5,212.4 447.5,216.5 448.5,220.7 449.5,224.8 450.5,229.0 451.5,233.2 452.5,237.4 453.5,241.6 454.5,245.9 455.5,250.1 456.5,254.4 457.5,258.6 458.5,262.9 459.5,267.2 460.5,271.4 461.5,275.7 462.5,279.9 463.5,284.1 464.5,288.4 465.5,292.6 466.5,296.7 467.5,300.9 468.5,305.1 469.5,309.2 470.5,313.3 471.5,317.3 472.5,321.3 473.5,325.3 474.5,329.3 475.5,333.2 476.5,337.1 477.5,340.9 478.5,344.7 479.5,348.4 480.5,352.1 481.5,355.7 482.5,359.3 483.5,362.8 484.5,366.3 485.5,369.7 486.5,373.0 487.5,376.3 488.5,379.5 489.5,382.7 490.5,385.7 491.5,388.7 492.5,391.6 493.5,394.5 494.5,397.3 495.5,400.0 496.5,402.6 497.5,405.1 498.5,407.6 499.5,409.9 500.5,412.2 501.5,414.4 502.5,416.5 503.5,418.5 504.5,420.4 505.5,422.3 506.5,424.0 507.5,425.7 508.5,427.2 509.5,428.7 510.5,430.0 511.5,431.3 512.5,432.4 513.5,433.5 514.5,434.5 515.5,435.3 516.5,436.1 517.5,436.8 518.5,437.3 519.5,437.8 520.5,438.1 521.5,438.4 522.5,438.5 523.5,438.6 524.5,438.5 525.5,438.4 526.5,438.1 527.5,437.8 528.5,437.3 529.5,436.8 530.5,436.1 531.5,435.3 532.5,434.5 533.5,433.5 534.5,432.5 535.5,431.3 536.5,430.0 537.5,428.7 538.5,427.2 539.5,425.7 540.5,424.0 541.5,422.3 542.5,420.5 543.5,418.6 544.5,416.5 545.5,414.4 546.5,412.2 547.5,410.0 548.5,407.6 549.5,405.2 550.5,402.6 551.5,400.0 552.5,397.3 553.5,394.6 554.5,391.7 555.5,388.8 556.5,385.8 557.5,382.7 558.5,379.6 559.5,376.4 560.5,373.1 561.5,369.8 562.5,366.4 563.5,362.9 564.5,359.4 565.5,355.8 566.5,352.2 567.5,348.5 568.5,344.8 569.5,341.0 570.5,337.1 571.5,333.3 572.5,329.4 573.5,325.4 574.5,321.4 575.5,317.4 576.5,313.3 577.5,309.2 578.5,305.1 579.5,301.0 580.5,296.8 581.5,292.6 582.5,288.4 583.5,284.2 584.5,280.0 585.5,275.8 586.5,271.5 587.5,267.2 588.5,263.0 589.5,258.7 590.5,254.5 591.5,250.2 592.5,246.0 593.5,241.7 594.5,237.5 595.5,233.3 596.5,229.1 597.5,224.9 598.5,220.7 599.5,216.6 600.5,212.5 601.5,208.4 602.5,204.3 603.5,200.3 604.5,196.3 605.5,192.4 606.5,188.5 607.5,184.6 608.5,180.8 609.5,177.0 610.5,173.3 611.5,169.6 612.5,166.0 613.5,162.4 614.5,158.9 615.5,155.5 616.5,152.1 617.5,148.7 618.5,145.5 619.5,142.3 620.5,139.1 621.5,136.1 622.5,133.1 623.5,130.2 624.5,127.3 625.5,124.6 626.5,121.9 627.5,119.3 628.5,116.8 629.5,114.3 630.5,112.0 631.5,109.7 632.5,107.5 633.5,105.4 634.5,103.4 635.5,101.5 636.5,99.7 637.5,98.0 638.5,96.4 639.5,94.8 640.5,93.4 641.5,92.0 642.5,90.8 643.5,89.6 644.5,88.6 645.5,87.6 646.5,86.8 647.5,86.0 648.5,85.8 649.5,85.8 650.5,85.8 651.5,85.8 652.5,85.8 653.5,85.8 654.5,85.8 655.5,85.8 656.5,85.8 657.5,85.8 658.5,85.8 659.5,85.8 660.5,85.8 661.5,86.2 662.5,87.0 663.5,87.9 664.5,88.8 665.5,89.9 666.5,91.1 667.5,92.4 668.5,93.7 669.5,95.2 670.5,96.8 671.5,98.4 672.5,100.2 673.5,102.0 674.5,104.0 675.5,106.0 676.5,108.1 677.5,110.3 678.5,112.6 679.5,115.0 680.5,117.4 681.5,120.0 682.5,122.6 683.5,125.3 684.5,128.1 685.5,130.9 686.5,133.9 687.5,136.9 688.5,139.9 689.5,143.1 690.5,146.3 691.5,149.6 692.5,152.9 693.5,156.3 694.5,159.8 695.5,163.3 696.5,166.9 697.5,170.6 698.5,174.3 699.5,178.0 700.5,181.8 701.5,185.6 702.5,189.5 703.5,193.4 704.5,197.4 705.5,201.4 706.5,205.4 707.5,209.5 708.5,213.6 709.5,217.7 710.5,221.8 711.5,226.0 712.5,230.2 713.5,234.4 714.5,238.6 715.5,242.8 716.5,247.1 717.5,251.3 718.5,255.6 719.5,259.8"/>
<text x="43.0" y="86.2" fill="#d07828" stroke="#d07828" stroke-width="0.30" font-size="10.5" text-anchor="end"  textLength="14.2" lengthAdjust="spacingAndGlyphs">2.5</text>
<text x="63.5" y="86.2" fill="#30c050" stroke="#30c050" stroke-width="0.30" font-size="10.5" text-anchor="end"  textLength="14.2" lengthAdjust="spacingAndGlyphs">2.5</text>
<text x="722.3" y="85.9" fill="#2cb8bc" stroke="#2cb8bc" stroke-width="0.30" font-size="10" text-anchor="start"  textLength="20.0" lengthAdjust="spacingAndGlyphs">10.0</text>
<text x="43.0" y="121.8" fill="#d07828" stroke="#d07828" stroke-width="0.30" font-size="10.5" text-anchor="end"  textLength="14.2" lengthAdjust="spacingAndGlyphs">2.0</text>
<text x="63.5" y="121.8" fill="#30c050" stroke="#30c050" stroke-width="0.30" font-size="10.5" text-anchor="end"  textLength="14.2" lengthAdjust="spacingAndGlyphs">2.0</text>
<text x="722.3" y="121.5" fill="#2cb8bc" stroke="#2cb8bc" stroke-width="0.30" font-size="10" text-anchor="start"  textLength="13.5" lengthAdjust="spacingAndGlyphs">8.0</text>
<text x="43.0" y="157.5" fill="#d07828" stroke="#d07828" stroke-width="0.30" font-size="10.5" text-anchor="end"  textLength="14.2" lengthAdjust="spacingAndGlyphs">1.5</text>
<text x="63.5" y="157.5" fill="#30c050" stroke="#30c050" stroke-width="0.30" font-size="10.5" text-anchor="end"  textLength="14.2" lengthAdjust="spacingAndGlyphs">1.5</text>
<text x="722.3" y="157.2" fill="#2cb8bc" stroke="#2cb8bc" stroke-width="0.30" font-size="10" text-anchor="start"  textLength="13.5" lengthAdjust="spacingAndGlyphs">6.0</text>
<text x="43.0" y="193.1" fill="#d07828" stroke="#d07828" stroke-width="0.30" font-size="10.5" text-anchor="end"  textLength="14.2" lengthAdjust="spacingAndGlyphs">1.0</text>
<text x="63.5" y="193.1" fill="#30c050" stroke="#30c050" stroke-width="0.30" font-size="10.5" text-anchor="end"  textLength="14.2" lengthAdjust="spacingAndGlyphs">1.0</text>
<text x="722.3" y="192.8" fill="#2cb8bc" stroke="#2cb8bc" stroke-width="0.30" font-size="10" text-anchor="start"  textLength="13.5" lengthAdjust="spacingAndGlyphs">4.0</text>
<text x="43.0" y="228.8" fill="#d07828" stroke="#d07828" stroke-width="0.30" font-size="10.5" text-anchor="end"  textLength="14.2" lengthAdjust="spacingAndGlyphs">0.5</text>
<text x="63.5" y="228.8" fill="#30c050" stroke="#30c050" stroke-width="0.30" font-size="10.5" text-anchor="end"  textLength="14.2" lengthAdjust="spacingAndGlyphs">0.5</text>
<text x="722.3" y="228.5" fill="#2cb8bc" stroke="#2cb8bc" stroke-width="0.30" font-size="10" text-anchor="start"  textLength="13.5" lengthAdjust="spacingAndGlyphs">2.0</text>
<text x="43.0" y="264.4" fill="#d07828" stroke="#d07828" stroke-width="0.30" font-size="10.5" text-anchor="end"  textLength="14.2" lengthAdjust="spacingAndGlyphs">0.0</text>
<text x="63.5" y="264.4" fill="#30c050" stroke="#30c050" stroke-width="0.30" font-size="10.5" text-anchor="end"  textLength="14.2" lengthAdjust="spacingAndGlyphs">0.0</text>
<text x="722.3" y="264.1" fill="#2cb8bc" stroke="#2cb8bc" stroke-width="0.30" font-size="10" text-anchor="start"  textLength="13.5" lengthAdjust="spacingAndGlyphs">0.0</text>
<text x="43.0" y="300.0" fill="#d07828" stroke="#d07828" stroke-width="0.30" font-size="10.5" text-anchor="end"  textLength="17.5" lengthAdjust="spacingAndGlyphs">-0.5</text>
<text x="63.5" y="300.0" fill="#30c050" stroke="#30c050" stroke-width="0.30" font-size="10.5" text-anchor="end"  textLength="17.5" lengthAdjust="spacingAndGlyphs">-0.5</text>
<text x="722.3" y="299.7" fill="#2cb8bc" stroke="#2cb8bc" stroke-width="0.30" font-size="10" text-anchor="start"  textLength="17.5" lengthAdjust="spacingAndGlyphs">-2.0</text>
<text x="43.0" y="335.7" fill="#d07828" stroke="#d07828" stroke-width="0.30" font-size="10.5" text-anchor="end"  textLength="17.5" lengthAdjust="spacingAndGlyphs">-1.0</text>
<text x="63.5" y="335.7" fill="#30c050" stroke="#30c050" stroke-width="0.30" font-size="10.5" text-anchor="end"  textLength="17.5" lengthAdjust="spacingAndGlyphs">-1.0</text>
<text x="722.3" y="335.4" fill="#2cb8bc" stroke="#2cb8bc" stroke-width="0.30" font-size="10" text-anchor="start"  textLength="17.5" lengthAdjust="spacingAndGlyphs">-4.0</text>
<text x="43.0" y="371.3" fill="#d07828" stroke="#d07828" stroke-width="0.30" font-size="10.5" text-anchor="end"  textLength="17.5" lengthAdjust="spacingAndGlyphs">-1.5</text>
<text x="63.5" y="371.3" fill="#30c050" stroke="#30c050" stroke-width="0.30" font-size="10.5" text-anchor="end"  textLength="17.5" lengthAdjust="spacingAndGlyphs">-1.5</text>
<text x="722.3" y="371.0" fill="#2cb8bc" stroke="#2cb8bc" stroke-width="0.30" font-size="10" text-anchor="start"  textLength="17.5" lengthAdjust="spacingAndGlyphs">-6.0</text>
<text x="43.0" y="407.0" fill="#d07828" stroke="#d07828" stroke-width="0.30" font-size="10.5" text-anchor="end"  textLength="17.5" lengthAdjust="spacingAndGlyphs">-2.0</text>
<text x="63.5" y="407.0" fill="#30c050" stroke="#30c050" stroke-width="0.30" font-size="10.5" text-anchor="end"  textLength="17.5" lengthAdjust="spacingAndGlyphs">-2.0</text>
<text x="722.3" y="406.7" fill="#2cb8bc" stroke="#2cb8bc" stroke-width="0.30" font-size="10" text-anchor="start"  textLength="17.5" lengthAdjust="spacingAndGlyphs">-8.0</text>
<text x="43.0" y="442.6" fill="#d07828" stroke="#d07828" stroke-width="0.30" font-size="10.5" text-anchor="end"  textLength="17.5" lengthAdjust="spacingAndGlyphs">-2.5</text>
<text x="63.5" y="442.6" fill="#30c050" stroke="#30c050" stroke-width="0.30" font-size="10.5" text-anchor="end"  textLength="17.5" lengthAdjust="spacingAndGlyphs">-2.5</text>
<text x="722.3" y="442.3" fill="#2cb8bc" stroke="#2cb8bc" stroke-width="0.30" font-size="10" text-anchor="start"  textLength="22.4" lengthAdjust="spacingAndGlyphs">-10.0</text>
<text x="65.5" y="451.5" fill="#8a8a8a" stroke="#8a8a8a" stroke-width="0.10" font-size="11" text-anchor="middle"  textLength="41.5" lengthAdjust="spacingAndGlyphs">20000 uS</text>
<text x="130.9" y="451.5" fill="#8a8a8a" stroke="#8a8a8a" stroke-width="0.10" font-size="11" text-anchor="middle"  textLength="41.5" lengthAdjust="spacingAndGlyphs">20500 uS</text>
<text x="196.4" y="451.5" fill="#8a8a8a" stroke="#8a8a8a" stroke-width="0.10" font-size="11" text-anchor="middle"  textLength="41.5" lengthAdjust="spacingAndGlyphs">21000 uS</text>
<text x="261.8" y="451.5" fill="#8a8a8a" stroke="#8a8a8a" stroke-width="0.10" font-size="11" text-anchor="middle"  textLength="41.5" lengthAdjust="spacingAndGlyphs">21500 uS</text>
<text x="327.2" y="451.5" fill="#8a8a8a" stroke="#8a8a8a" stroke-width="0.10" font-size="11" text-anchor="middle"  textLength="41.5" lengthAdjust="spacingAndGlyphs">22000 uS</text>
<text x="392.6" y="451.5" fill="#8a8a8a" stroke="#8a8a8a" stroke-width="0.10" font-size="11" text-anchor="middle"  textLength="41.5" lengthAdjust="spacingAndGlyphs">22500 uS</text>
<text x="458.1" y="451.5" fill="#8a8a8a" stroke="#8a8a8a" stroke-width="0.10" font-size="11" text-anchor="middle"  textLength="41.5" lengthAdjust="spacingAndGlyphs">23000 uS</text>
<text x="523.5" y="451.5" fill="#8a8a8a" stroke="#8a8a8a" stroke-width="0.10" font-size="11" text-anchor="middle"  textLength="41.5" lengthAdjust="spacingAndGlyphs">23500 uS</text>
<text x="588.9" y="451.5" fill="#8a8a8a" stroke="#8a8a8a" stroke-width="0.10" font-size="11" text-anchor="middle"  textLength="41.5" lengthAdjust="spacingAndGlyphs">24000 uS</text>
<text x="654.4" y="451.5" fill="#8a8a8a" stroke="#8a8a8a" stroke-width="0.10" font-size="11" text-anchor="middle"  textLength="41.5" lengthAdjust="spacingAndGlyphs">24500 uS</text>
<text x="719.8" y="451.5" fill="#8a8a8a" stroke="#8a8a8a" stroke-width="0.10" font-size="11" text-anchor="middle"  textLength="41.5" lengthAdjust="spacingAndGlyphs">25000 uS</text>
<text x="64.5" y="75.5" fill="#dcdcdc" stroke="#dcdcdc" stroke-width="0.12" font-size="11" text-anchor="start"  textLength="253.6" lengthAdjust="spacingAndGlyphs">Device ID 03930313830313 Sample rate: 100000 Stopped</text>
<text x="70.0" y="97.0" fill="#3cc84a" stroke="#3cc84a" stroke-width="0.30" font-size="11" text-anchor="start" xml:space="preserve" textLength="103.5" lengthAdjust="spacingAndGlyphs">1  21.80  mS,  -0.013  V</text>
<text x="70.0" y="107.0" fill="#3cc84a" stroke="#3cc84a" stroke-width="0.30" font-size="11" text-anchor="start" xml:space="preserve" textLength="218.2" lengthAdjust="spacingAndGlyphs">2  22.28  mS,  -0.013  V Delta  0.483  mS,  0.000  V</text>
<text x="66.0" y="462.0" fill="#d8d8d8" stroke="#d8d8d8" stroke-width="0.12" font-size="11" text-anchor="start" xml:space="preserve" textLength="540.7" lengthAdjust="spacingAndGlyphs">500 uS/div  View at 20.0 mS  CA Period =  2.00  mS  CA Freq =  500.0  Hz  CA-B Phase =  26.0  deg  CB-A Delay =  0.28  mS</text>
<text x="66.0" y="473.5" fill="#d8d8d8" stroke="#d8d8d8" stroke-width="0.12" font-size="11" text-anchor="start" xml:space="preserve" textLength="263.5" lengthAdjust="spacingAndGlyphs">CHA: 0.5 V/div P-PV =  4.9831 CHA: 2.0 mA/div P-PI =  8.35</text>
<text x="66.0" y="484.0" fill="#d8d8d8" stroke="#d8d8d8" stroke-width="0.12" font-size="11" text-anchor="start" xml:space="preserve" textLength="132.0" lengthAdjust="spacingAndGlyphs">CHB: 0.5 V/div P-PV =  2.9847</text>
<text x="303.5" y="264.0" fill="#c4c4c4" stroke="#c4c4c4" stroke-width="0.05" font-size="11" text-anchor="middle"  textLength="11.5" lengthAdjust="spacingAndGlyphs">X1</text>
<text x="366.5" y="264.0" fill="#c4c4c4" stroke="#c4c4c4" stroke-width="0.05" font-size="11" text-anchor="middle"  textLength="11.5" lengthAdjust="spacingAndGlyphs">X2</text></g></svg>
<div class="a" style="left:11.0px;top:493.0px;width:762.0px;height:29.0px;border:1px solid;border-color:#ffffff #808080 #808080 #ffffff;"></div>
<div class="a" style="left:12.0px;top:494.0px;width:760.0px;height:27.0px;border:1px solid;border-color:#808080 #ffffff #ffffff #808080;"></div>
<div class="e" style="left:15.0px;top:499.5px;width:35.0px;height:17.5px;line-height:14.5px"><span style="transform:scaleX(0.880)">0.5</span></div>
<div class="sp" style="left:41.0px;top:501.5px;width:9.0px;height:13.5px"></div>
<div class="b g" style="left:51.0px;top:497.0px;width:45.0px;height:21.0px;"><span style="transform:scaleX(0.845);font-size:11px">CA V/Div</span></div>
<div class="e" style="left:96.0px;top:499.5px;width:30.0px;height:17.5px;line-height:14.5px"><span style="transform:scaleX(0.880)">0</span></div>
<div class="b g" style="left:126.0px;top:497.0px;width:45.0px;height:21.0px;"><span style="transform:scaleX(0.845);font-size:11px">CA V Pos</span></div>
<div class="e" style="left:172.0px;top:499.5px;width:34.0px;height:17.5px;line-height:14.5px"><span style="transform:scaleX(0.880)">2.0</span></div>
<div class="sp" style="left:196.0px;top:501.5px;width:9.0px;height:13.5px"></div>
<div class="b cy" style="left:206.0px;top:497.0px;width:52.0px;height:21.0px;"><span style="transform:scaleX(0.845);font-size:11px">CA mA/Div</span></div>
<div class="e" style="left:258.0px;top:499.5px;width:30.0px;height:17.5px;line-height:14.5px"><span style="transform:scaleX(0.880)">0.0</span></div>
<div class="b cy" style="left:288.0px;top:497.0px;width:44.0px;height:21.0px;"><span style="transform:scaleX(0.845);font-size:11px">CA I Pos</span></div>
<div class="e" style="left:332.0px;top:499.5px;width:34.0px;height:17.5px;line-height:14.5px"><span style="transform:scaleX(0.880)">0.5</span></div>
<div class="sp" style="left:357.0px;top:501.5px;width:9.0px;height:13.5px"></div>
<div class="b or" style="left:367.0px;top:497.0px;width:44.0px;height:21.0px;"><span style="transform:scaleX(0.845);font-size:11px">CB V/Div</span></div>
<div class="e" style="left:411.0px;top:499.5px;width:31.0px;height:17.5px;line-height:14.5px"><span style="transform:scaleX(0.880)">0</span></div>
<div class="b or" style="left:442.0px;top:497.0px;width:44.0px;height:21.0px;"><span style="transform:scaleX(0.845);font-size:11px">CB V Pos</span></div>
<div class="e" style="left:486.0px;top:499.5px;width:35.0px;height:17.5px;line-height:14.5px"><span style="transform:scaleX(0.880)">2.0</span></div>
<div class="sp" style="left:511.0px;top:501.5px;width:9.0px;height:13.5px"></div>
<div class="b ye" style="left:521.0px;top:497.0px;width:51.0px;height:21.0px;"><span style="transform:scaleX(0.845);font-size:11px">CB mA/Div</span></div>
<div class="e" style="left:572.0px;top:499.5px;width:30.0px;height:17.5px;line-height:14.5px"><span style="transform:scaleX(0.880)">0.0</span></div>
<div class="b ye" style="left:602.0px;top:497.0px;width:42.0px;height:21.0px;"><span style="transform:scaleX(0.845);font-size:11px">CB I Pos</span></div>
<div class="a" style="left:775.0px;top:26.0px;width:122.0px;height:495.5px;border-style:solid;border-width:2px 1.5px 1.5px 2px;border-color:#ffffff #8a8a8a #8a8a8a #ffffff;"></div>
<div class="a" style="left:777.0px;top:28.0px;width:118.5px;height:492.0px;border-style:solid;border-width:1px 1.5px 1.5px 1px;border-color:#909090 #ffffff #ffffff #909090;"></div>
<div class="b g" style="left:788.0px;top:29.0px;width:35.0px;height:21.0px;"><span style="transform:scaleX(0.880);font-size:11px">Conn</span></div>
<div class="b " style="left:823.0px;top:29.0px;width:25.0px;height:21.0px;"><span style="transform:scaleX(0.880);font-size:11px">File</span></div>
<div class="b " style="left:848.0px;top:29.0px;width:36.0px;height:21.0px;"><span style="transform:scaleX(0.860);font-size:11px">Options</span></div>
<div class="l" style="left:790.0px;top:53.5px;line-height:14px;font-size:11px;transform:scaleX(0.880);">Meas</div>
<div class="b " style="left:816.0px;top:50.0px;width:22.0px;height:21.0px;"><span style="transform:scaleX(0.880);font-size:11px">CA</span></div>
<div class="b " style="left:838.0px;top:50.0px;width:22.0px;height:21.0px;"><span style="transform:scaleX(0.880);font-size:11px">CB</span></div>
<div class="b " style="left:860.0px;top:50.0px;width:24.0px;height:21.0px;"><span style="transform:scaleX(0.860);font-size:11px">Math</span></div>
<div class="b " style="left:788.0px;top:71.0px;width:96.0px;height:19.0px;"><span style="transform:scaleX(0.880);font-size:11px">AWG Window</span></div>
<div class="b " style="left:788.0px;top:90.0px;width:96.0px;height:19.0px;"><span style="transform:scaleX(0.880);font-size:11px">X-Y Plot Window</span></div>
<div class="b " style="left:788.0px;top:109.0px;width:96.0px;height:20.0px;"><span style="transform:scaleX(0.880);font-size:11px">Spectrum Window</span></div>
<div class="b " style="left:788.0px;top:129.0px;width:96.0px;height:19.0px;"><span style="transform:scaleX(0.880);font-size:11px">Bode Plot Window</span></div>
<div class="b " style="left:788.0px;top:148.0px;width:96.0px;height:19.0px;"><span style="transform:scaleX(0.880);font-size:11px">Impedance Window</span></div>
<div class="a" style="left:796.2px;top:170.5px;width:11.0px;height:11.0px;background:#fff;border:1px solid;border-color:#909090 #f0f0f0 #f0f0f0 #909090;box-shadow:inset 1px 1px #404040;"></div>
<svg class="a" style="left:796.2px;top:170.5px" width="11" height="11"><path d="M2.5,5 L4.5,7.5 L8.5,2.5" fill="none" stroke="#000" stroke-width="1.6"/></svg>
<div class="l" style="left:811.5px;top:169.0px;line-height:14px;font-size:11px;transform:scaleX(0.855);">Enab Time Plot</div>
<div class="a" style="left:799.2px;top:189.5px;width:11.0px;height:11.0px;background:#fff;border:1px solid;border-color:#909090 #f0f0f0 #f0f0f0 #909090;box-shadow:inset 1px 1px #404040;"></div>
<div class="l" style="left:814.2px;top:188.0px;line-height:14px;font-size:11px;transform:scaleX(0.855);">Enab X-Y Plot</div>
<div class="a" style="left:796.2px;top:208.5px;width:11.0px;height:11.0px;background:#fff;border:1px solid;border-color:#909090 #f0f0f0 #f0f0f0 #909090;box-shadow:inset 1px 1px #404040;"></div>
<div class="l" style="left:811.5px;top:207.0px;line-height:14px;font-size:11px;transform:scaleX(0.855);">Enab Freq Plot</div>
<div class="a" style="left:795.7px;top:227.5px;width:11.0px;height:11.0px;background:#fff;border:1px solid;border-color:#909090 #f0f0f0 #f0f0f0 #909090;box-shadow:inset 1px 1px #404040;"></div>
<div class="l" style="left:810.7px;top:226.0px;line-height:14px;font-size:11px;transform:scaleX(0.855);">Enab Bode Plot</div>
<div class="a" style="left:782.7px;top:246.5px;width:11.0px;height:11.0px;background:#fff;border:1px solid;border-color:#909090 #f0f0f0 #f0f0f0 #909090;box-shadow:inset 1px 1px #404040;"></div>
<div class="l" style="left:798.0px;top:245.0px;line-height:14px;font-size:11px;transform:scaleX(0.855);">Enab Impedance Plot</div>
<div class="b " style="left:795.0px;top:262.0px;width:80.0px;height:18.0px;"><span style="transform:scaleX(0.880);font-size:11px">Digital I/O Screen</span></div>
<div class="b " style="left:795.0px;top:281.0px;width:80.0px;height:17.0px;"><span style="transform:scaleX(0.880);font-size:11px">PIO-DAC Screen</span></div>
<div class="b " style="left:785.0px;top:300.0px;width:100.0px;height:19.0px;"><span style="transform:scaleX(0.880);font-size:11px">Analog In Mux Screen</span></div>
<div class="b " style="left:785.0px;top:319.0px;width:100.0px;height:19.0px;"><span style="transform:scaleX(0.880);font-size:11px">Digital Filter</span></div>
<div class="b " style="left:785.0px;top:338.0px;width:100.0px;height:18.0px;"><span style="transform:scaleX(0.880);font-size:11px">Command Interface</span></div>
<div class="l" style="left:792.0px;top:358.0px;line-height:14px;font-size:11px;transform:scaleX(0.920);">Adjust Gain / Offset</div>
<div class="l" style="left:793.5px;top:375.1px;line-height:14px;font-size:11px;transform:scaleX(0.850);">CA-V</div>
<div class="e" style="left:818.4px;top:374.4px;width:30.3px;height:15.2px;line-height:12.2px"><span style="transform:scaleX(0.880)">1.0</span></div>
<div class="e" style="left:848.7px;top:374.4px;width:30.7px;height:15.2px;line-height:12.2px"><span style="transform:scaleX(0.880)">2.5</span></div>
<div class="l" style="left:793.5px;top:392.0px;line-height:14px;font-size:11px;transform:scaleX(0.850);">CB-V</div>
<div class="e" style="left:818.4px;top:391.3px;width:30.3px;height:15.2px;line-height:12.2px"><span style="transform:scaleX(0.880)">1.0</span></div>
<div class="e" style="left:848.7px;top:391.3px;width:30.7px;height:15.2px;line-height:12.2px"><span style="transform:scaleX(0.880)">2.5</span></div>
<div class="l" style="left:793.5px;top:409.7px;line-height:14px;font-size:11px;transform:scaleX(0.850);">CA-I</div>
<div class="e" style="left:818.4px;top:409.0px;width:30.3px;height:15.2px;line-height:12.2px"><span style="transform:scaleX(0.880)">1.0</span></div>
<div class="e" style="left:848.7px;top:409.0px;width:30.7px;height:15.2px;line-height:12.2px"><span style="transform:scaleX(0.880)">0.0</span></div>
<div class="l" style="left:793.5px;top:426.6px;line-height:14px;font-size:11px;transform:scaleX(0.850);">CB-I</div>
<div class="e" style="left:818.4px;top:425.9px;width:30.3px;height:15.2px;line-height:12.2px"><span style="transform:scaleX(0.880)">1.0</span></div>
<div class="e" style="left:848.7px;top:425.9px;width:30.7px;height:15.2px;line-height:12.2px"><span style="transform:scaleX(0.880)">0.0</span></div>
<div class="a" style="left:784.0px;top:444.0px;width:106.0px;height:44.5px;background:#ffffff;"></div>
<div class="a" style="left:787.0px;top:458.3px;width:27.0px;height:27.2px;background:#1a1a1a;"></div>
<svg class="a" style="left:0;top:0" width="912" height="534" font-family="Liberation Sans, sans-serif" font-weight="bold" fill="#1a1a1a"><polygon points="792.5,462.8 809.8,472 792.5,481.4" fill="#fff"/><text x="811.5" y="452.5" font-size="8.5" fill="#8a8a8a" textLength="49" lengthAdjust="spacingAndGlyphs">Analog ICs by</text><text x="819" y="470.4" font-size="15.8" textLength="65.5" lengthAdjust="spacingAndGlyphs">ANALOG</text><text x="819" y="484.9" font-size="15.8" textLength="65.7" lengthAdjust="spacingAndGlyphs">DEVICES</text></svg>
</div>
</body></html>
